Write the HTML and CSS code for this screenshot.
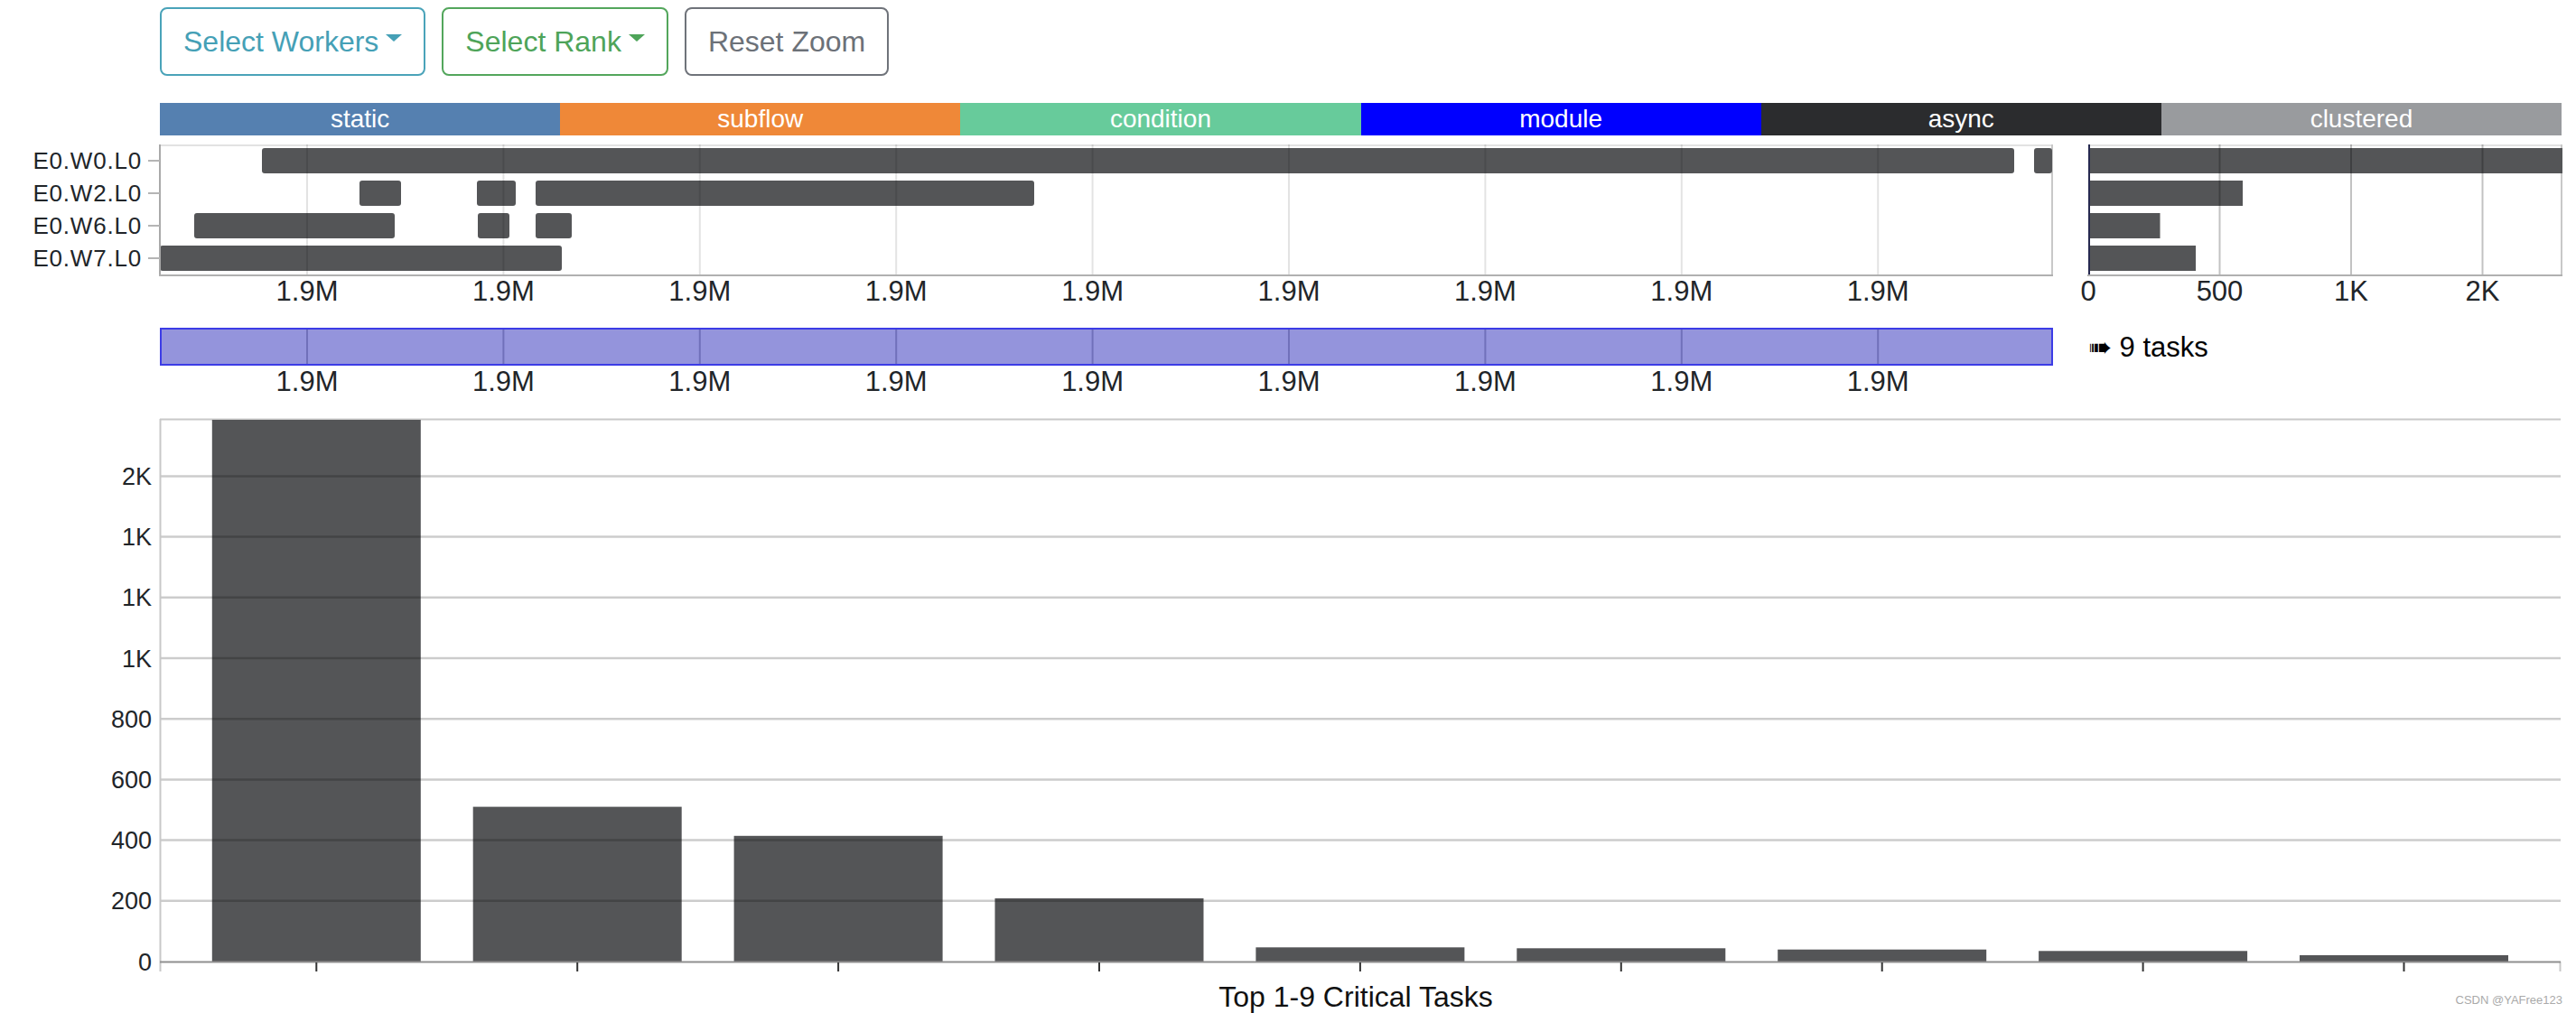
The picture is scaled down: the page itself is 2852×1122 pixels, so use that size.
FILE: index.html
```html
<!DOCTYPE html>
<html>
<head>
<meta charset="utf-8">
<title>Taskflow Profiler</title>
<link rel="stylesheet" href="styles.css">
</head>
<body>
<div class="toolbar">
  <button class="btn btn-info dropdown">Select Workers</button>
  <button class="btn btn-success dropdown">Select Rank</button>
  <button class="btn btn-secondary">Reset Zoom</button>
</div>

<div class="legend">
  <div class="seg seg-static">static</div>
  <div class="seg seg-subflow">subflow</div>
  <div class="seg seg-condition">condition</div>
  <div class="seg seg-module">module</div>
  <div class="seg seg-async">async</div>
  <div class="seg seg-clustered">clustered</div>
</div>

<svg class="top-panel" width="2852" height="200" viewBox="0 0 2852 200">
  <!-- timeline frame -->
  <line class="frame-top" x1="177" x2="2273" y1="11" y2="11"/>
  <line class="frame-right" x1="2272" x2="2272" y1="10" y2="154"/>
  <!-- bars -->
  <g class="tbar">
    <rect x="290" y="14" width="1940" height="28" rx="3"/>
    <rect x="2252" y="14" width="20" height="28" rx="3"/>
    <rect x="398" y="50" width="46" height="28" rx="3"/>
    <rect x="528" y="50" width="43" height="28" rx="3"/>
    <rect x="593" y="50" width="552" height="28" rx="3"/>
    <rect x="215" y="86" width="222" height="28" rx="3"/>
    <rect x="529" y="86" width="35" height="28" rx="3"/>
    <rect x="593" y="86" width="40" height="28" rx="3"/>
    <rect x="177" y="122" width="445" height="28" rx="3"/>
  </g>
  <g class="grid-light">
    <line x1="340" x2="340" y1="10" y2="154"/>
    <line x1="557.4" x2="557.4" y1="10" y2="154"/>
    <line x1="774.8" x2="774.8" y1="10" y2="154"/>
    <line x1="992.2" x2="992.2" y1="10" y2="154"/>
    <line x1="1209.6" x2="1209.6" y1="10" y2="154"/>
    <line x1="1427" x2="1427" y1="10" y2="154"/>
    <line x1="1644.4" x2="1644.4" y1="10" y2="154"/>
    <line x1="1861.8" x2="1861.8" y1="10" y2="154"/>
    <line x1="2079.2" x2="2079.2" y1="10" y2="154"/>
  </g>
  <line class="axis-y" x1="177" x2="177" y1="10" y2="156"/>
  <g class="ytick">
    <line x1="164" x2="177" y1="28" y2="28"/>
    <line x1="164" x2="177" y1="64" y2="64"/>
    <line x1="164" x2="177" y1="100" y2="100"/>
    <line x1="164" x2="177" y1="136" y2="136"/>
  </g>
  <g class="row-label">
    <text x="157" y="37">E0.W0.L0</text>
    <text x="157" y="73">E0.W2.L0</text>
    <text x="157" y="109">E0.W6.L0</text>
    <text x="157" y="145">E0.W7.L0</text>
  </g>
  <line class="axis-x" x1="176" x2="2273" y1="155" y2="155"/>
  <g class="tick-label">
    <text x="340" y="183">1.9M</text>
    <text x="557.4" y="183">1.9M</text>
    <text x="774.8" y="183">1.9M</text>
    <text x="992.2" y="183">1.9M</text>
    <text x="1209.6" y="183">1.9M</text>
    <text x="1427" y="183">1.9M</text>
    <text x="1644.4" y="183">1.9M</text>
    <text x="1861.8" y="183">1.9M</text>
    <text x="2079.2" y="183">1.9M</text>
  </g>

  <!-- right summary chart -->
  <line class="frame-top" x1="2312" x2="2837" y1="11" y2="11"/>
  <line class="frame-right" x1="2836" x2="2836" y1="10" y2="154"/>
  <g class="tbar">
    <rect x="2312" y="14" width="525" height="28"/>
    <rect x="2312" y="50" width="171" height="28"/>
    <rect x="2312" y="86" width="79.5" height="28"/>
    <rect x="2312" y="122" width="119" height="28"/>
  </g>
  <g class="grid-dark">
    <line x1="2457.5" x2="2457.5" y1="10" y2="154"/>
    <line x1="2603" x2="2603" y1="10" y2="154"/>
    <line x1="2748.5" x2="2748.5" y1="10" y2="154"/>
  </g>
  <line class="axis-dark" x1="2313" x2="2313" y1="10" y2="154"/>
  <line class="axis-x" x1="2311" x2="2837" y1="155" y2="155"/>
  <g class="tick-label">
    <text x="2312" y="183">0</text>
    <text x="2457.5" y="183">500</text>
    <text x="2603" y="183">1K</text>
    <text x="2748.5" y="183">2K</text>
  </g>
</svg>

<div class="overview">
  <svg class="brush" width="2098" height="90" viewBox="0 0 2098 90">
    <rect class="brush-area" x="2" y="14" width="2094" height="40"/>
    <g class="brush-grid">
      <line x1="164" x2="164" y1="15" y2="53"/>
      <line x1="381.4" x2="381.4" y1="15" y2="53"/>
      <line x1="598.8" x2="598.8" y1="15" y2="53"/>
      <line x1="816.2" x2="816.2" y1="15" y2="53"/>
      <line x1="1033.6" x2="1033.6" y1="15" y2="53"/>
      <line x1="1251" x2="1251" y1="15" y2="53"/>
      <line x1="1468.4" x2="1468.4" y1="15" y2="53"/>
      <line x1="1685.8" x2="1685.8" y1="15" y2="53"/>
      <line x1="1903.2" x2="1903.2" y1="15" y2="53"/>
    </g>
    <g class="tick-label">
      <text x="164" y="83">1.9M</text>
      <text x="381.4" y="83">1.9M</text>
      <text x="598.8" y="83">1.9M</text>
      <text x="816.2" y="83">1.9M</text>
      <text x="1033.6" y="83">1.9M</text>
      <text x="1251" y="83">1.9M</text>
      <text x="1468.4" y="83">1.9M</text>
      <text x="1685.8" y="83">1.9M</text>
      <text x="1903.2" y="83">1.9M</text>
    </g>
  </svg>
  <div class="tasks"><span class="arrow">&#10144;</span> 9 tasks</div>
</div>

<svg class="bottom-panel" width="2852" height="682" viewBox="0 0 2852 682">
  <line class="bframe" x1="177" x2="2835" y1="24.5" y2="24.5"/>
  <g class="tbar">
    <rect x="234.8" y="25" width="231" height="600"/>
    <rect x="523.7" y="453.6" width="231" height="171.4"/>
    <rect x="812.6" y="485.8" width="231" height="139.2"/>
    <rect x="1101.5" y="555" width="231" height="70"/>
    <rect x="1390.4" y="609.3" width="231" height="15.7"/>
    <rect x="1679.3" y="610.3" width="231" height="14.7"/>
    <rect x="1968.2" y="611.7" width="231" height="13.3"/>
    <rect x="2257.1" y="613.3" width="231" height="11.7"/>
    <rect x="2546" y="618" width="231" height="7"/>
  </g>
  <g class="grid-h">
    <line x1="177" x2="2835" y1="557.8" y2="557.8"/>
    <line x1="177" x2="2835" y1="490.6" y2="490.6"/>
    <line x1="177" x2="2835" y1="423.4" y2="423.4"/>
    <line x1="177" x2="2835" y1="356.2" y2="356.2"/>
    <line x1="177" x2="2835" y1="289" y2="289"/>
    <line x1="177" x2="2835" y1="221.8" y2="221.8"/>
    <line x1="177" x2="2835" y1="154.6" y2="154.6"/>
    <line x1="177" x2="2835" y1="87.4" y2="87.4"/>
  </g>
  <line class="bframe" x1="177.5" x2="177.5" y1="24" y2="636"/>
  <line class="bframe" x1="2834.5" x2="2834.5" y1="625" y2="636"/>
  <g class="ylabel">
    <text x="168" y="634.5">0</text>
    <text x="168" y="567.3">200</text>
    <text x="168" y="500.1">400</text>
    <text x="168" y="432.9">600</text>
    <text x="168" y="365.7">800</text>
    <text x="168" y="298.5">1K</text>
    <text x="168" y="231.3">1K</text>
    <text x="168" y="164.1">1K</text>
    <text x="168" y="96.9">2K</text>
  </g>
  <line class="baxis" x1="177" x2="2835" y1="625.5" y2="625.5"/>
  <g class="xtick">
    <line x1="350.3" x2="350.3" y1="626" y2="636"/>
    <line x1="639.2" x2="639.2" y1="626" y2="636"/>
    <line x1="928.1" x2="928.1" y1="626" y2="636"/>
    <line x1="1217" x2="1217" y1="626" y2="636"/>
    <line x1="1505.9" x2="1505.9" y1="626" y2="636"/>
    <line x1="1794.8" x2="1794.8" y1="626" y2="636"/>
    <line x1="2083.7" x2="2083.7" y1="626" y2="636"/>
    <line x1="2372.6" x2="2372.6" y1="626" y2="636"/>
    <line x1="2661.5" x2="2661.5" y1="626" y2="636"/>
  </g>
  <text class="chart-title" x="1501" y="675">Top 1-9 Critical Tasks</text>
  <text class="watermark" x="2837" y="672">CSDN @YAFree123</text>
</svg>
</body>
</html>
```

FILE: styles.css
```css
html, body {
  margin: 0;
  padding: 0;
  background: #ffffff;
  overflow: hidden;
}

body {
  font-family: "Liberation Sans", Arial, sans-serif;
  color: #212529;
}

.toolbar {
  display: flex;
  gap: 18px;
  padding: 8px 0 0 177px;
}

.btn {
  font-family: "Liberation Sans", Arial, sans-serif;
  font-size: 32px;
  line-height: 48px;
  padding: 12px 24px;
  border: 2px solid;
  border-radius: 8px;
  background: #ffffff;
  display: inline-flex;
  align-items: center;
  cursor: pointer;
}

.btn-info {
  color: #45a0b6;
  border-color: #4aa3b9;
}

.btn-success {
  color: #4ea459;
  border-color: #53a65c;
}

.btn-secondary {
  color: #6c7178;
  border-color: #6f737a;
}

.dropdown::after {
  content: "";
  display: inline-block;
  margin-left: 8px;
  margin-top: -8px;
  border-top: 8px solid currentColor;
  border-left: 9px solid transparent;
  border-right: 9px solid transparent;
}

.legend {
  display: flex;
  margin: 30px 0 0 177px;
  width: 2659px;
  height: 36px;
}

.seg {
  flex: 1;
  text-align: center;
  color: #ffffff;
  font-size: 28px;
  line-height: 36px;
}

.seg-static { background: #5580b0; }
.seg-subflow { background: #ef8838; }
.seg-condition { background: #67cb9b; }
.seg-module { background: #0000ff; }
.seg-async { background: #2b2c2e; }
.seg-clustered { background: #999b9e; }

svg {
  display: block;
  font-family: "Liberation Sans", Arial, sans-serif;
}

.tbar rect {
  fill: #545557;
}

.frame-top {
  stroke: #e2e2e2;
  stroke-width: 2;
}

.frame-right {
  stroke: #c8c8c8;
  stroke-width: 2;
}

.grid-light line {
  stroke: rgba(0, 0, 0, 0.11);
  stroke-width: 2;
}

.grid-dark line {
  stroke: rgba(0, 0, 0, 0.24);
  stroke-width: 2;
}

.axis-y {
  stroke: #a9a9a9;
  stroke-width: 2;
}

.axis-dark {
  stroke: #262950;
  stroke-width: 2;
}

.axis-x {
  stroke: #b0b0b0;
  stroke-width: 2;
}

.ytick line {
  stroke: #b5b5b5;
  stroke-width: 2;
}

.row-label text {
  font-size: 26px;
  letter-spacing: 0.8px;
  text-anchor: end;
  fill: #212529;
}

.tick-label text {
  font-size: 31px;
  text-anchor: middle;
  fill: #212529;
}

.overview {
  display: flex;
  align-items: flex-start;
  padding-left: 176px;
  height: 90px;
}

.brush-area {
  fill: #9494dc;
  stroke: #3c3ce6;
  stroke-width: 2;
}

.brush-grid line {
  stroke: rgba(30, 30, 110, 0.3);
  stroke-width: 2;
}

.tasks {
  margin: 16px 0 0 38px;
  font-size: 31px;
  line-height: 36px;
  color: #000000;
  white-space: nowrap;
}

.arrow {
  font-family: "DejaVu Sans", sans-serif;
  font-size: 31px;
}

.bframe {
  stroke: #c8c8c8;
  stroke-width: 2;
}

.grid-h line {
  stroke: rgba(0, 0, 0, 0.2);
  stroke-width: 2.5;
}

.ylabel text {
  font-size: 27px;
  text-anchor: end;
  fill: #212529;
}

.baxis {
  stroke: #8f8f8f;
  stroke-width: 2;
}

.xtick line {
  stroke: #333333;
  stroke-width: 2;
}

.chart-title {
  font-size: 32px;
  text-anchor: middle;
  fill: #111111;
}

.watermark {
  font-size: 13px;
  text-anchor: end;
  fill: #aaaaaa;
}
```
